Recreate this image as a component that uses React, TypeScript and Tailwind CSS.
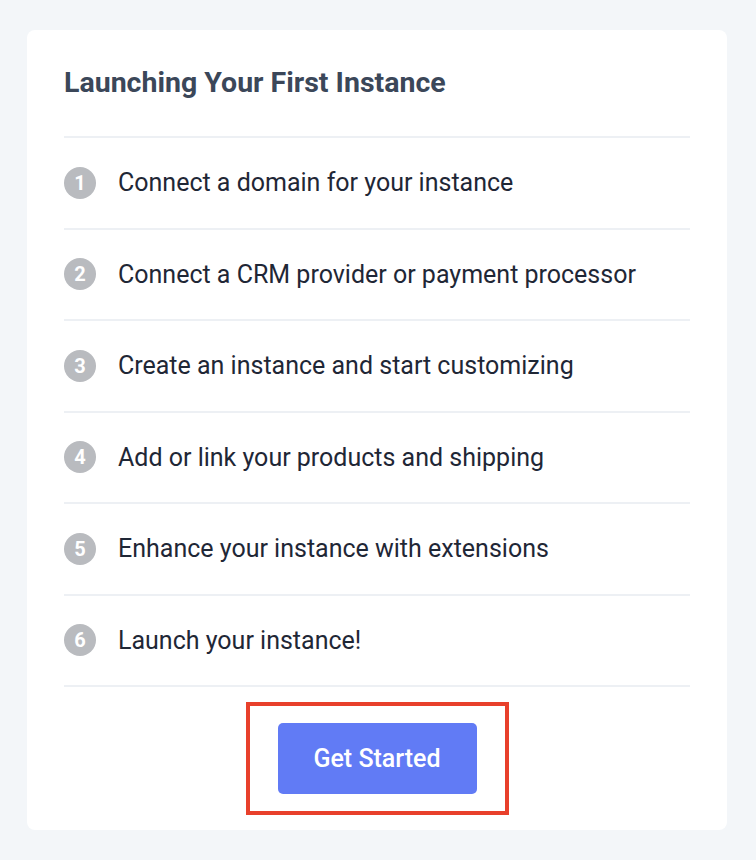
const steps = [
  "Connect a domain for your instance",
  "Connect a CRM provider or payment processor",
  "Create an instance and start customizing",
  "Add or link your products and shipping",
  "Enhance your instance with extensions",
  "Launch your instance!",
];

export default function App() {
  return (
    <div className="min-h-[860px] bg-[#f3f6f9] pt-[30px] pl-[27px] font-['Roboto',sans-serif]">
      <div className="w-[700px] h-[800px] rounded-lg bg-white px-[37px] pt-[36px]">
        <h2 className="text-[28.5px] leading-[33px] font-bold text-[#3b4759] pb-[37px] border-b-2 border-[#edf0f4]">
          Launching Your First Instance
        </h2>
        <ul>
          {steps.map((s, i) => (
            <li
              key={i}
              className="flex items-center h-[91.5px] border-b-2 border-[#edf0f4]"
            >
              <span className="w-8 h-8 shrink-0 rounded-full bg-[#b9bbbf] text-white text-[20px] font-bold flex items-center justify-center">
                {i + 1}
              </span>
              <span className="ml-[22px] text-[25px] text-[#1f2736]">{s}</span>
            </li>
          ))}
        </ul>
        <div className="flex justify-center mt-[15px]">
          <div className="border-4 border-[#e8402b] px-[28px] py-[17px]">
            <button className="w-[199px] h-[71px] rounded-[5px] bg-[#617bf5] text-white text-[25px] font-medium">
              Get Started
            </button>
          </div>
        </div>
      </div>
    </div>
  );
}
